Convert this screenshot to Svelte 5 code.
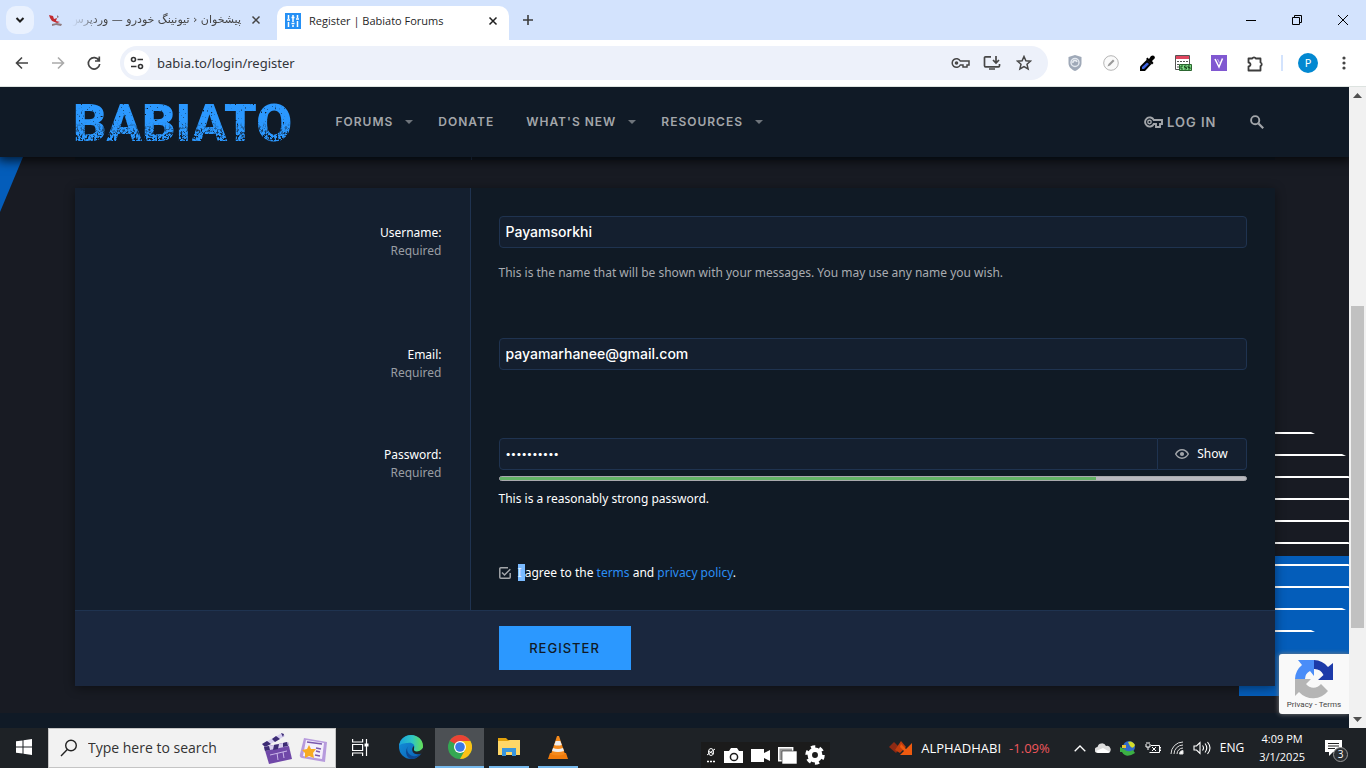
<script>
  let username = $state('Payamsorkhi');
  let email = $state('payamarhanee@gmail.com');
  let password = $state('Payam12345');
  let visible = $state(false);
  let agreed = $state(true);
  let address = $state('babia.to/login/register');
  const strength = 80;
  const nav = [
    { label: 'Forums', menu: true },
    { label: 'Donate', menu: false },
    { label: "What's new", menu: true },
    { label: 'Resources', menu: true }
  ];
  const stripes = [
    [0, 38], [22, 69], [44, 75], [66, 75], [88, 75],
    [110, 75], [132, 75], [154, 75], [176, 69], [198, 38]
  ];
</script>

<div class="desktop">
  <header class="tabs">
    <button class="tabsearch" aria-label="Search tabs">
      <svg width="10" height="10" viewBox="0 0 10 10"><path d="M1.5 3l3.5 3.5L8.5 3" fill="none" stroke="#1f1f1f" stroke-width="2" /></svg>
    </button>
    <div class="tab other">
      <svg width="16" height="13" viewBox="0 0 14 13"><path d="M0 1l4 1 1 3 3-1-1 3 4 1-3 1-5-2-2-3z" fill="#c22a30" /><path d="M3 10l5-1 5 1-1 2-5-1-4 1zM8 1l2 2-2 1z" fill="#8f7b80" /></svg>
      <button class="title faded" dir="rtl">پیشخوان ‹ تیونینگ خودرو — وردپرس</button>
      <button class="close" aria-label="Close tab"><svg width="10" height="10" viewBox="0 0 10 10"><path d="M1.500 1.500l7 7M8.500 1.500l-7 7" stroke="#444" stroke-width="1.500" /></svg></button>
    </div>
    <div class="tab current">
      <svg width="16" height="16" viewBox="0 0 16 16"><rect width="16" height="16" fill="#2590f5" /><path d="M3.500 2v4M3.500 9v5M8 2v7M8 12v2M12.500 2v3M12.500 8v6M2 7h3M6.500 10.500h3M11 6h3M6.500 4.500h3" stroke="#fff" stroke-width="1.500" /></svg>
      <button class="title">Register | Babiato Forums</button>
      <button class="close" aria-label="Close tab"><svg width="10" height="10" viewBox="0 0 10 10"><path d="M1.500 1.500l7 7M8.500 1.500l-7 7" stroke="#1f1f1f" stroke-width="1.500" /></svg></button>
    </div>
    <button class="newtab" aria-label="New tab"><svg width="12" height="12" viewBox="0 0 12 12"><path d="M6 1v10M1 6h10" stroke="#3c3c3c" stroke-width="1.600" /></svg></button>
    <div class="window">
      <button aria-label="Minimize"><svg width="10" height="10"><path d="M0 5.500h10" stroke="#000" /></svg></button>
      <button aria-label="Restore"><svg width="10" height="10" fill="none" stroke="#000"><path d="M.5 2.500h7v7h-7zM2.500 2.500v-2h7v7h-2" /></svg></button>
      <button aria-label="Close"><svg width="10" height="10"><path d="M0 0l10 10M10 0L0 10" stroke="#000" /></svg></button>
    </div>
  </header>

  <div class="toolbar">
    <button class="tool" aria-label="Back"><svg width="16" height="16" viewBox="0 0 16 16"><path d="M14 8H3M8 2.500L2.500 8 8 13.500" fill="none" stroke="#444" stroke-width="1.600" /></svg></button>
    <button class="tool" aria-label="Forward"><svg width="16" height="16" viewBox="0 0 16 16"><path d="M2 8h11M8 2.500L13.500 8 8 13.500" fill="none" stroke="#aaa" stroke-width="1.600" /></svg></button>
    <button class="tool" aria-label="Reload"><svg width="16" height="16" viewBox="0 0 16 16"><path d="M13 5.500A5.700 5.700 0 1 0 13.700 9M13.300 1.500v4.500H9" fill="none" stroke="#444" stroke-width="1.700" /></svg></button>
    <div class="omnibox">
      <button class="site" aria-label="Site information"><svg width="14" height="14" viewBox="0 0 14 14" fill="none" stroke="#333" stroke-width="1.600"><circle cx="3.500" cy="3.500" r="2" /><path d="M7.500 3.500H13M1 10.500h5.500" /><circle cx="10.500" cy="10.500" r="2" /></svg></button>
      <input class="url" aria-label="Address" bind:value={address} />
      <button class="tool" aria-label="Passwords"><svg width="19" height="14" viewBox="0 0 19 14"><path d="M9.300 5A4.300 4.300 0 1 0 9.300 9H12v2h4V9h2V5z" fill="none" stroke="#474747" stroke-width="1.500" /><circle cx="5.500" cy="7" r="1.800" fill="#474747" /></svg></button>
      <button class="tool" aria-label="Install app"><svg width="18" height="16" viewBox="0 0 18 16"><path d="M8 1.800H2.500a1 1 0 0 0-1 1v8a1 1 0 0 0 1 1h13a1 1 0 0 0 1-1V9M13 1v6M10 5l3 3 3-3M6 14h6" fill="none" stroke="#474747" stroke-width="1.700" /></svg></button>
      <button class="tool" aria-label="Bookmark"><svg width="16" height="16" viewBox="0 0 16 16"><path d="M8 1.500l1.900 4.300 4.600.4-3.500 3.100 1.100 4.600L8 11.500l-4.100 2.400L5 9.300 1.500 6.200l4.600-.4z" fill="none" stroke="#474747" stroke-width="1.500" /></svg></button>
    </div>
    <div class="extensions">
      <button aria-label="Shield"><svg width="14" height="16" viewBox="0 0 14 16"><path d="M7 0l6.500 2v6c0 4-3 6.500-6.500 8C3.500 14.500.5 12 .5 8V2z" fill="#9fa9b8" /><circle cx="7" cy="7.500" r="4" fill="none" stroke="#e3e8ef" stroke-width="1.500" /><path d="M5 8a2 2 0 0 1 4-1" fill="none" stroke="#e9edf2" stroke-width="1.500" /></svg></button>
      <button aria-label="Pencil"><svg width="16" height="16" viewBox="0 0 16 16"><circle cx="8" cy="8" r="7.300" fill="#fafafa" stroke="#b5b5b5" /><path d="M4.500 11.500l1-2.500L10 4.500 11.500 6 7 10.500z" fill="#999" /></svg></button>
      <button aria-label="Color picker"><svg width="16" height="17" viewBox="0 0 16 17"><path d="M8 4.500l4.500 4.500L6 16H1v-4.500z" fill="#000" /><path d="M8 7.500l2 1.500-5 5H3v-2z" fill="#3f63dc" /><path d="M7 4l1.500-1.500L10 4l2-3q3.500-1.500 4 2l-3 3 1.500 2L13 9.500z" fill="#000" /></svg></button>
      <button aria-label="CSS viewer"><svg width="17" height="17" viewBox="0 0 17 17"><path d="M.5.500h14v14H.5z" fill="#fff" stroke="#555" /><path d="M1 1h13v3H1z" fill="#e0455e" /><path d="M2 6.500h11M2 9.500h3M2 12h2" stroke="#555" stroke-dasharray="2 1" /><path d="M4.500 9.500h12v6h-12z" fill="#7ed985" stroke="#2c6630" /><path d="M8 11H6v3h2M11.500 11h-2v1.500h2V14h-2M15 11h-2v1.500h2V14h-2" fill="none" stroke="#184a1c" /></svg></button>
      <button aria-label="V extension"><svg width="16" height="16" viewBox="0 0 16 16"><rect width="16" height="16" fill="#8058d1" /><path d="M4 4l4 8 3.500-8.500" fill="none" stroke="#fff" stroke-width="1.500" /><path d="M6.500 4l2 4" stroke="#c7b5ef" /></svg></button>
      <button aria-label="Extensions"><svg width="17" height="17" viewBox="0 0 17 17"><path d="M1.500 3.500h3.700a2 1.900 0 0 1 3.600 0h4.700v4a1.800 1.900 0 0 1 0 3.600v4.400h-12v-4a2 2 0 0 0 0-4z" fill="none" stroke="#3c3c3c" stroke-width="1.800" stroke-linejoin="round" /></svg></button>
      <span class="rule"></span>
      <button class="avatar" aria-label="Profile">P</button>
      <button aria-label="Menu"><svg width="4" height="14" viewBox="0 0 4 14" fill="#444"><circle cx="2" cy="2" r="1.600" /><circle cx="2" cy="7" r="1.600" /><circle cx="2" cy="12" r="1.600" /></svg></button>
    </div>
  </div>

  <div class="viewport">
    <div class="page">
      <svg class="wedge" width="24" height="55" viewBox="0 0 24 55" aria-hidden="true"><path d="M0 0h23L0 55z" fill="#045dba" /></svg>
      <svg class="lines" width="110" height="264" viewBox="0 0 110 264" aria-hidden="true">
        <path d="M0 124h110v140H0z" fill="#045dba" />
        {#each stripes as [y, w]}<path d="M36 {y}H{36 + w - 2}L{36 + w + 2} {y + 2}H36z" fill="#fff" />{/each}
      </svg>

      <div class="navbar">
        <div class="inner navinner">
          <a class="logo" href="#home" aria-label="Babiato">
            <svg width="220" height="48" viewBox="0 0 220 48">
              <defs>
                <filter id="dense" x="0" y="0" width="100%" height="100%">
                  <feTurbulence type="fractalNoise" baseFrequency="0.5 0.35" numOctaves="3" seed="4" />
                  <feColorMatrix values="0 0 0 0 0  0 0 0 0 0  0 0 0 0 0  8 0 0 0 -3.900" />
                </filter>
                <filter id="specks" x="0" y="0" width="100%" height="100%">
                  <feTurbulence type="fractalNoise" baseFrequency="0.5" numOctaves="2" seed="9" />
                  <feColorMatrix values="0 0 0 0 0  0 0 0 0 0  0 0 0 0 0  9 0 0 0 -6.100" />
                </filter>
                <linearGradient id="fall" x1="0" y1="0" x2="0" y2="1"><stop offset=".5" stop-color="#000" /><stop offset=".8" stop-color="#fff" /></linearGradient>
                <mask id="lower"><rect width="220" height="48" fill="url(#fall)" /></mask>
                <mask id="worn" maskUnits="userSpaceOnUse" x="-4" y="-4" width="228" height="56"><rect x="-4" y="-4" width="228" height="56" fill="#fff" /><rect width="220" height="48" filter="url(#specks)" /><g mask="url(#lower)"><rect width="220" height="48" filter="url(#dense)" /></g></mask>
              </defs>
              <text x="-2" y="43" mask="url(#worn)" class="wordmark">BABIATO</text>
            </svg>
          </a>
          <nav>
            {#each nav as item}
              <div class="navitem">
                <a href="#nav">{item.label}</a>
                {#if item.menu}
                  <button aria-label="{item.label} menu"><svg width="8" height="4" viewBox="0 0 8 4"><path d="M0 0h8L4 4z" fill="#6e747b" /></svg></button>
                {/if}
              </div>
            {/each}
          </nav>
          <a class="login" href="#login">
            <svg width="19" height="12" viewBox="0 0 19 12"><path d="M9.800 4A4.600 4.600 0 1 0 9.800 8H12v3h4V8h2V4z" fill="none" stroke="#a3a6aa" stroke-width="1.900" /><circle cx="5.500" cy="6" r="1.700" fill="none" stroke="#a3a6aa" stroke-width="1.400" /></svg>
            Log in
          </a>
          <button class="find" aria-label="Search"><svg width="14" height="14" viewBox="0 0 14 14"><circle cx="5.200" cy="5.200" r="4.100" fill="none" stroke="#a3a6aa" stroke-width="1.900" /><path d="M8.500 8.500l4.700 4.700" stroke="#a3a6aa" stroke-width="2.200" /></svg></button>
        </div>
      </div>

      <main class="inner">
        <div class="previous"><span></span></div>
        <form class="card" onsubmit={(e) => e.preventDefault()}>
          <div class="row">
            <div class="name"><label for="user">Username:</label><small>Required</small></div>
            <div class="field">
              <input id="user" class="box" type="text" bind:value={username} />
              <p class="hint">This is the name that will be shown with your messages. You may use any name you wish.</p>
            </div>
          </div>
          <div class="row">
            <div class="name"><label for="mail">Email:</label><small>Required</small></div>
            <div class="field roomy"><input id="mail" class="box" type="email" bind:value={email} /></div>
          </div>
          <div class="row">
            <div class="name"><label for="pass">Password:</label><small>Required</small></div>
            <div class="field">
              <div class="group">
                <input id="pass" class="box secret" class:dots={!visible} type={visible ? 'text' : 'password'} bind:value={password} />
                <button type="button" class="show" onclick={() => (visible = !visible)}>
                  <svg width="14" height="10" viewBox="0 0 14 10"><path d="M.7 5Q3 .8 7 .8T13.300 5Q11 9.200 7 9.200T.7 5z" fill="none" stroke="#a3a6aa" stroke-width="1.500" /><circle cx="7" cy="5" r="2.100" fill="#a3a6aa" /></svg>
                  Show
                </button>
              </div>
              <div class="meter"><span style="width: {strength}%"></span></div>
              <p class="verdict">This is a reasonably strong password.</p>
            </div>
          </div>
          <div class="row">
            <div class="name"></div>
            <div class="field consent">
              <span class="tick">
                <input id="agree" type="checkbox" bind:checked={agreed} />
                {#if agreed}<svg width="12" height="12" viewBox="0 0 12 12"><path d="M11.200 6v4.200a1 1 0 0 1-1 1H1.800a1 1 0 0 1-1-1V1.800a1 1 0 0 1 1-1H9M3 5.500L5.500 8 11.300 2.200" fill="none" stroke="#a3a6aa" stroke-width="1.500" /></svg>{/if}
              </span>
              <label for="agree"><mark>{'I '}</mark>agree to the <a href="#terms">terms</a> and <a href="#privacy">privacy policy</a>.</label>
            </div>
          </div>
          <div class="submit"><button>Register</button></div>
        </form>
      </main>
      <footer class="foot"></footer>

      <aside class="captcha">
        <svg width="40" height="40" viewBox="0 0 40 40">
          <path d="M20 1A19 19 0 0 1 34 8l5-4v17H24l5.500-5A10 10 0 0 0 20 10z" fill="#1c3aa9" />
          <path d="M20 1H4l4 5A19 19 0 0 0 1 20h10a9 9 0 0 1 5-8l4 5z" fill="#4a8df8" />
          <path d="M1 20v17l4-4a19 19 0 0 0 29-1l-7-7a9.500 9.500 0 0 1-15 0l5-5z" fill="#b5b5b5" />
        </svg>
        <div><a href="#p">Privacy</a> - <a href="#t">Terms</a></div>
      </aside>
    </div>
    <div class="scroll" aria-hidden="true">
      <svg width="9" height="5" viewBox="0 0 9 5"><path d="M0 5h9L4.500 0z" fill="#505050" /></svg>
      <div class="track"><span></span></div>
      <svg width="9" height="5" viewBox="0 0 9 5"><path d="M0 0h9L4.500 5z" fill="#505050" /></svg>
    </div>
  </div>

  <div class="taskbar">
    <button class="app" aria-label="Start"><svg width="16" height="16" viewBox="0 0 16 16" fill="#fff"><path d="M0 2.300L6.500 1.400V7.500H0zM7.500 1.200L16 0v7.500H7.500zM0 8.500h6.500v6.100L0 13.700zM7.500 8.500H16V16l-8.500-1.200z" /></svg></button>
    <div class="search">
      <svg width="18" height="18" viewBox="0 0 18 18" fill="none" stroke="#222" stroke-width="1.400"><circle cx="11" cy="6.500" r="5.300" /><path d="M7.300 10.500L1 17" /></svg>
      <input aria-label="Search Windows" placeholder="Type here to search" />
      <svg width="66" height="34" viewBox="0 0 66 34">
        <path d="M1 13L21 2l3 3L4 16z" fill="#d5cdf0" /><path d="M1 13l5-3 4 3-6 3zM11 8l4-3 4 3-5 3zM20 2l3 1-1 3z" fill="#3d2c74" />
        <path d="M3 16l24-5 4 17-23 5z" fill="#7048a8" /><path d="M3 16l24-5 1 4-24 5z" fill="#d8ceef" /><path d="M3 16l5-1 1 4-5 1zM13 14l5-1-1 5-5 1zM22 12l4-1 1 4-5 1z" fill="#3d2c74" /><path d="M9 24l17-4M16 22l1 7M22 21l1 6" stroke="#c9b5e8" />
        <path d="M43 7l23 4-2 20-23-4q-3-1-2-4z" fill="#b79bdd" /><path d="M45 9l18 3-2 16-19-3z" fill="#f4effb" /><path d="M46 11l15 2M55 17l5 1M55 20l4 1M54 24l5 1" stroke="#7a58ad" stroke-width="1.500" />
        <path d="M48 14l2 4 5 0-3 4 1 5-5-2-4 2 0-5-3-3 5-1z" fill="#f7ab24" />
      </svg>
    </div>
    <button class="app view" aria-label="Task view"><svg width="17" height="17" viewBox="0 0 17 17" fill="none" stroke="#fff" stroke-width="1.200"><path d="M.6 0v3h10V0M.6 17v-3h10v3M.6 5.500h10v6h-10zM14.500 0v17" /><path d="M12.500 6h4" stroke-width="3" /></svg></button>
    <button class="app" aria-label="Edge"><svg width="24" height="24" viewBox="0 0 24 24"><defs><linearGradient id="edgeTop" x1="0" x2="1"><stop stop-color="#18a1dd" /><stop offset=".55" stop-color="#2fc6c4" /><stop offset="1" stop-color="#68e051" /></linearGradient><linearGradient id="edgeLow" x1="0" y1="0" x2="1" y2="1"><stop stop-color="#1393dc" /><stop offset="1" stop-color="#0b5eb4" /></linearGradient></defs><circle cx="12" cy="12" r="12" fill="url(#edgeLow)" /><path d="M0 11C1 4 6 0 12 0c7 0 12 5 12 11 0 4-3 6-6 6-3 0-4-1-3-3 2-5-3-7-6-6-4 0-8 1-9 3z" fill="url(#edgeTop)" /><path d="M10 10c-4 4-1 10 4 11 3 1 6-1 8-3-3 5-7 6-10 6C7 23 5 15 10 10z" fill="#0d4892" /><path d="M15 14c-1 3 5 4 9-1v4q-1 2-3 2c-7 2-10-5-6-8z" fill="#212529" /></svg></button>
    <button class="app active open" aria-label="Chrome"><svg width="24" height="24" viewBox="0 0 24 24"><circle cx="12" cy="12" r="12" fill="#34a853" /><path d="M12 12L1.600 6A12 12 0 0 1 22.400 6z" fill="#ea4335" /><path d="M12 6h10.400A12 12 0 0 1 12 24l5-9z" fill="#fbc116" /><path d="M1.600 6l5.200 9L9 10z" fill="#34a853" /><circle cx="12" cy="12" r="6" fill="#fff" /><circle cx="12" cy="12" r="4.800" fill="#3b78e7" /></svg></button>
    <button class="app open short" aria-label="File Explorer"><svg width="22" height="20" viewBox="0 0 22 20"><path d="M0 1h8l2 2h12v15H0z" fill="#e3a20b" /><path d="M0 4h10l2-1h10v15H0z" fill="#ffd767" /><path d="M4 11h14v8h-4v-4H8v4H4z" fill="#3a96dd" /></svg></button>
    <button class="app open short" aria-label="VLC"><svg width="20" height="23" viewBox="0 0 20 23"><path d="M2 17h16l2 6H0z" fill="#f07b0b" /><path d="M9 0h2l6 18q-7 3-14 0z" fill="#f58a1c" /><path d="M7.700 5h4.600l1.500 4q-4 1-7.600 0zM5 12q5 2 10 0l1 3q-6 2-12 0z" fill="#eee" /></svg></button>

    <div class="capture">
      <svg width="10" height="16" viewBox="0 0 10 16" fill="none" stroke="#fff"><ellipse cx="5" cy="5" rx="2.500" ry="3.500" /><path d="M1 8l8-6M2 4l6 3" /><path d="M1 14.500h8" stroke-width="1.500" stroke-dasharray="2 1" /></svg>
      <svg width="19" height="15" viewBox="0 0 19 15"><path d="M0 3h5l2-3h6l2 3h4v12H0z" fill="#fff" /><circle cx="10" cy="9" r="3.600" fill="none" stroke="#1b1b1b" stroke-width="1.500" /></svg>
      <svg width="19" height="13" viewBox="0 0 19 13" fill="#fff"><path d="M0 0h13v4l6-3v11l-6-3v4H0z" /></svg>
      <svg width="19" height="17" viewBox="0 0 19 17"><path d="M.7.700h14v13h-14z" fill="#999" stroke="#fff" stroke-width="1.400" /><path d="M4 4h15v13H4z" fill="#fff" stroke="#222" stroke-width=".6" /></svg>
      <svg width="20" height="20" viewBox="0 0 20 20"><circle cx="10" cy="10" r="5.200" fill="none" stroke="#fff" stroke-width="4.500" /><circle cx="10" cy="10" r="8" fill="none" stroke="#fff" stroke-width="3.500" stroke-dasharray="4.190 4.190" /></svg>
    </div>

    <div class="tray">
      <button class="stock">
        <svg width="24" height="15" viewBox="0 0 24 15"><path d="M0 6l5-5 6 6-4 5z" fill="#8e2a14" /><path d="M6 9l6-9 5 6-6 6z" fill="#c23d0d" /><path d="M12 3l5 5 6-6v12H11l4-4-4-4z" fill="#ee5a0f" /></svg>
        <span>ALPHADHABI</span><b>-1.09%</b>
      </button>
      <svg width="12" height="7" viewBox="0 0 12 7"><path d="M.7 6.300L6 1l5.300 5.300" fill="none" stroke="#fff" stroke-width="1.300" /></svg>
      <svg width="16" height="10" viewBox="0 0 16 10"><path d="M3 10a3 3 0 0 1-.5-6A4.500 4.500 0 0 1 11 3a3.500 3.500 0 0 1 2 7z" fill="#ddd" /><path d="M1 8l7-3 7 4-2 1H3z" fill="#fff" /></svg>
      <svg width="16" height="15" viewBox="0 0 16 15"><circle cx="9" cy="6" r="6" fill="#3069c9" /><path d="M8 1q4-2 7 3-2 5-5 1z" fill="#d4dc28" /><path d="M0 6l4 2q4 4 9 1l2 3q-9 6-13-1H0z" fill="#3bb044" /><path d="M2 4h4v3H2z" fill="#eac534" /></svg>
      <svg width="16" height="12" viewBox="0 0 16 12" fill="none" stroke="#fff"><path d="M1 2v3h4V2M2 0v2M4 0v2M3 5v3M6 3.500h8.500v7h-10M14.500 5.500H16v3h-1.500" /><path d="M7 5l4 4M11 5L7 9" /></svg>
      <svg width="14" height="14" viewBox="0 0 14 14" fill="none" stroke="#ddd"><path d="M1 13A12 12 0 0 1 13 1M4 13a9 9 0 0 1 9-9M7 13a6 6 0 0 1 6-6" /><path d="M9.500 13A3.500 3.500 0 0 1 13 9.500V13z" fill="#fff" /></svg>
      <svg width="18" height="14" viewBox="0 0 18 14" fill="none" stroke="#fff" stroke-width="1.100"><path d="M1 5h2.500L7 1.500v11L3.500 9H1zM9.500 4.500q2 2.500 0 5M12 2.500q3.500 4.500 0 9M14.500 1q5 6 0 12" /></svg>
      <span>ENG</span>
      <time><span>4:09 PM</span><span>3/1/2025</span></time>
      <button class="notes" aria-label="3 notifications">
        <svg width="17" height="16" viewBox="0 0 17 16"><path d="M0 0h17v12H8l-4 4v-4H0z" fill="#fff" /><path d="M3 3.500h11M3 6h11M3 8.500h7" stroke="#222" /></svg>
        <em>3</em>
      </button>
    </div>
  </div>
</div>

<style>
  :global(body) { margin: 0; background: #181b23; }
  * { box-sizing: border-box; }
  button, input { font: inherit; color: inherit; border: 0; background: none; padding: 0; margin: 0; outline: 0; }
  a { color: inherit; text-decoration: none; }
  p { margin: 0; }
  svg { display: block; flex: none; }
  button { display: flex; align-items: center; justify-content: center; flex: none; }
  .desktop { min-height: 100vh; display: flex; flex-direction: column; font: 12px/18px "Noto Sans", "Open Sans", sans-serif; overflow: hidden; }

  .tabs { height: 40px; background: #d3e3fd; display: flex; align-items: center; padding-left: 6px; color: #1f1f1f; }
  .tabsearch { width: 28px; height: 28px; border-radius: 10px; background: #e9f1fe; }
  .tab { display: flex; align-items: center; gap: 8px; height: 34px; }
  .other { width: 229px; margin-left: 14px; padding-right: 16px; }
  .other .close { margin-left: 2px; }
  .current { width: 232px; align-self: flex-end; background: #fff; border-radius: 10px 10px 0 0; padding: 0 11px 4px 8px; }
  .title { flex: 1; min-width: 0; overflow: hidden; white-space: nowrap; justify-content: flex-start; font-family: "Open Sans", sans-serif; font-size: 11px; height: 24px; }
  .faded { color: #444; font-family: "DejaVu Sans", sans-serif; mask-image: linear-gradient(90deg, transparent, #000 30px); }
  .newtab { width: 38px; height: 28px; }
  .window { margin-left: auto; display: flex; align-self: stretch; }
  .window button { width: 46px; }

  .toolbar { height: 47px; background: #fff; border-bottom: 1px solid #dde3e0; display: flex; align-items: center; padding-left: 4px; }
  .tool { width: 36px; height: 32px; }
  .omnibox { flex: 1; height: 34px; border-radius: 17px; background: #edf1fa; display: flex; align-items: center; padding: 0 8px 0 4px; margin: 0 9px 0 8px; }
  .omnibox .tool { width: 32px; }
  .site { width: 26px; height: 26px; border-radius: 50%; background: #fff; margin-right: 7px; }
  .url { flex: 1; min-width: 0; font-size: 13px; color: #33363b; }
  .extensions { display: flex; align-items: center; padding-right: 4px; }
  .extensions button { width: 36px; height: 32px; margin: 0; }
  .extensions .avatar { width: 20px; height: 20px; border-radius: 50%; background: #0288d1; color: #fff; font-size: 11px; margin: 0 8px 0 15px; }
  .rule { width: 2px; height: 16px; background: #d3e3fd; margin-left: 8px; }

  .viewport { flex: 1; display: flex; min-height: 0; }
  .page { flex: 1; position: relative; background: #181b23; display: flex; flex-direction: column; overflow: hidden; }
  .wedge { position: absolute; left: 0; top: 70px; }
  .lines { position: absolute; right: 0; top: 345px; }
  .inner { width: 100%; max-width: 1200px; margin: 0 auto; position: relative; }
  .navbar { position: relative; z-index: 1; background: #101a26; box-shadow: 0 2px 10px 2px rgba(0, 0, 0, 0.7); }
  .navinner { display: flex; align-items: center; height: 70px; color: #a3a6aa; font: 600 12px/20px Inter, sans-serif; letter-spacing: 1px; text-transform: uppercase; }
  .logo svg { overflow: visible; }
  .wordmark { font: 900 52px Roboto, sans-serif; fill: #2b98ff; letter-spacing: 0; }
  nav { display: flex; margin-left: 25px; }
  .navitem { display: flex; padding-left: 16px; padding-right: 16px; }
  .navitem:has(button) { padding-right: 9px; }
  .navitem button { padding-left: 12px; }
  .login { margin-left: auto; display: flex; align-items: center; gap: 4px; font-size: 13px; }
  .find { margin: 0 11px 0 33px; }

  .previous { height: 3px; background: #101a25; padding-left: 33%; margin-bottom: 28px; }
  .previous span { display: block; width: 1px; height: 3px; background: #1f3350; }
  .card { background: #101a25; box-shadow: 0 2px 10px rgba(0, 0, 0, 0.45); color: #fff; }
  .row { display: grid; grid-template-columns: 33% 1fr; }
  .name { background: #141f2f; border-right: 1px solid #1f3350; padding: 36px 28px 0 0; display: flex; flex-direction: column; align-items: flex-end; }
  .name small { font-size: 12px; color: #999da3; }
  .field { padding: 28px; }
  .roomy { padding-bottom: 40px; }
  .box { display: block; width: 100%; height: 32px; border: 1px solid #1f3350; border-radius: 4px; background: #141f2f; padding: 0 6px 2px; font: 500 14px/20px Inter, sans-serif; }
  .hint { margin-top: 16px; color: #a9acb1; }
  .group { display: flex; }
  .secret { flex: 1; border-radius: 4px 0 0 4px; min-width: 0; }
  .dots { font-size: 10px; }
  .show { width: 89px; height: 32px; gap: 8px; border: 1px solid #1f3350; border-left-width: 0; border-radius: 0 4px 4px 0; background: #141f2f; }
  .meter { height: 5px; margin-top: 6px; border: 1px solid #a9a9ad; border-radius: 3px; background: #b9b9bf; display: flex; }
  .meter span { background: #63b265; }
  .verdict { margin-top: 9px; }
  .consent { display: flex; align-items: center; gap: 7px; }
  .consent a { color: #2b8ff5; }
  .tick { display: grid; width: 12px; height: 12px; }
  .tick > * { grid-area: 1 / 1; }
  .tick input { appearance: none; width: 12px; height: 12px; border: 1px solid transparent; }
  .tick input:not(:checked) { border-color: #a3a6aa; }
  .tick svg { pointer-events: none; }
  mark { background: #7abaff; color: #dceeff; }
  .submit { background: #1a273e; border-top: 1px solid #1f3350; padding: 15px 0 16px; padding-left: calc(33% + 28px); }
  .submit button { width: 132px; height: 44px; background: #2b98ff; color: #101a26; font: 500 13px/20px Inter, sans-serif; letter-spacing: 1px; text-transform: uppercase; }
  .foot { margin-top: auto; height: 15px; background: #101a26; }
  .captcha { position: absolute; right: 0; bottom: 14px; width: 70px; height: 60px; border-radius: 3px 0 0 3px; background: #f9f9f9; box-shadow: 0 0 5px gray; display: flex; flex-direction: column; align-items: center; padding-top: 5px; font: 8px/12px Roboto, sans-serif; color: #444; z-index: 2; }
  .scroll { width: 17px; background: #f1f1f1; display: flex; flex-direction: column; align-items: center; padding: 6px 0; }
  .track { flex: 1; width: 13px; display: flex; flex-direction: column; padding: 6px 0; }
  .track span { height: 53%; margin-top: 202px; background: #c1c1c1; }

  .taskbar { height: 40px; background: #1e2226; display: flex; color: #fff; font-family: "Open Sans", sans-serif; }
  .app { width: 49px; height: 40px; border-bottom: 2px solid transparent; }
  .app:first-child, .view { width: 48px; }
  .view { margin-right: 2px; }
  .active { background: #4c5054; }
  .open { border-color: #76b9ed; }
  .short { width: 40px; margin-left: 5px; margin-right: 4px; }
  .search { width: 288px; background: #f2f2f2; border: 1px solid #c4c4c4; display: flex; align-items: center; padding: 0 8px 0 11px; gap: 10px; }
  .search input { flex: 1; min-width: 0; font-size: 14px; color: #222; }
  .search input::placeholder { color: #333; opacity: 1; }
  .capture { display: flex; align-items: center; align-self: flex-end; gap: 8px; height: 26px; padding: 0 5px; margin-left: 119px; background: #1b1b1b; }
  .tray { margin-left: auto; display: flex; align-items: center; gap: 9px; padding-right: 24px; }
  .stock { gap: 8px; font-size: 13px; margin-right: 15px; }
  .stock b { font-weight: 400; color: #f0575c; }
  time { display: flex; flex-direction: column; align-items: center; margin: 0 7px 0 6px; font-size: 11px; }
  .notes { position: relative; margin-left: 4px; }
  .notes em { position: absolute; left: 8px; top: 7px; width: 15px; height: 15px; border: 1px solid #999; border-radius: 50%; background: #2b2f33; font: 10px/13px "Open Sans", sans-serif; }
</style>
